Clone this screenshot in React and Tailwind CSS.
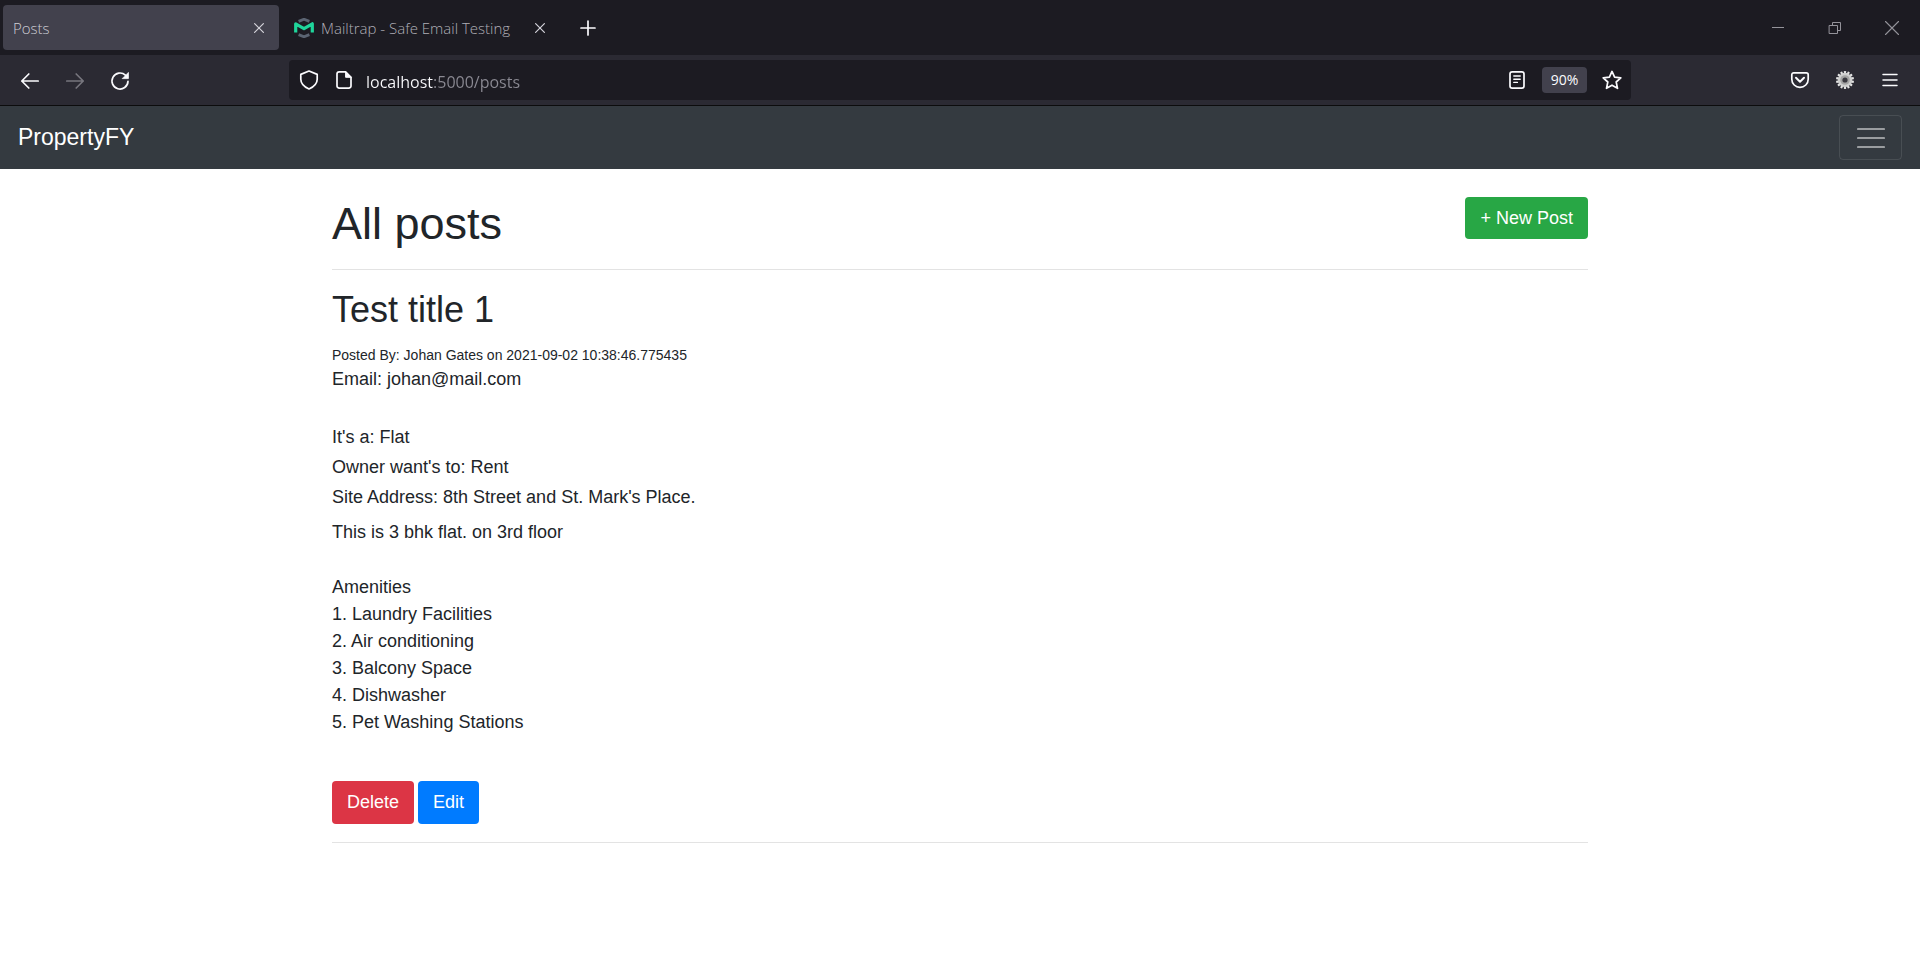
import React from "react";

const amenities = [
  "1. Laundry Facilities",
  "2. Air conditioning",
  "3. Balcony Space",
  "4. Dishwasher",
  "5. Pet Washing Stations",
];

function Icon({ children, className = "" }) {
  return (
    <svg
      viewBox="0 0 20 20"
      className={`size-5 shrink-0 ${className}`}
      fill="none"
      stroke="currentColor"
      strokeWidth="1.7"
      strokeLinecap="round"
      strokeLinejoin="round"
      aria-hidden="true"
    >
      {children}
    </svg>
  );
}

function CloseTab({ label }) {
  return (
    <button type="button" aria-label={label} className="flex size-5 items-center justify-center text-[#d4d3da]">
      <Icon>
        <path d="M5.6 5.6l8.8 8.8M14.4 5.6l-8.8 8.8" strokeWidth="1.2" />
      </Icon>
    </button>
  );
}

function MailtrapLogo() {
  return (
    <svg viewBox="0 0 20 20" className="size-5 shrink-0" fill="none" aria-hidden="true">
      <path d="M4.6 3.4L10 1.2l5.400 2.200M4.600 16.600L10 18.800l5.400-2.200" stroke="#5b6472" strokeWidth="2.800" />
      <path d="M1.700 14.600V5.800L10 10.600l8.300-4.800v8.800" stroke="#1fd59b" strokeWidth="3.200" strokeLinejoin="round" />
    </svg>
  );
}

function Gear() {
  const teeth = Array.from({ length: 14 }, (_, i) => i * (360 / 14));
  return (
    <svg viewBox="0 0 20 20" className="size-5" aria-hidden="true">
      {teeth.map((a) => (
        <rect key={a} x="8.9" y="1" width="2.2" height="4" rx="0.4" fill="#e4e4e4" transform={`rotate(${a} 10 10)`} />
      ))}
      <circle cx="10" cy="10" r="7.2" fill="#cfcfcf" />
      <circle cx="10" cy="10" r="4.8" fill="#a4a4a4" />
      <circle cx="10" cy="10" r="2.6" fill="#3a3940" />
    </svg>
  );
}

function TabBar() {
  return (
    <div className="flex h-[55px] items-center justify-between bg-[#1c1b22] pl-[3px] text-[15px] leading-5 font-light text-[#b0afb7]">
      <div className="flex items-center">
        <div className="flex h-[45px] w-[276px] items-center justify-between rounded bg-[#42414d] px-[10px] text-[#cfced6]">
          <span className="pt-px">Posts</span>
          <CloseTab label="Close Posts" />
        </div>
        <div className="flex items-center pl-[15px]">
          <MailtrapLogo />
          <span className="w-[216px] pt-px pl-[7px] whitespace-nowrap">Mailtrap - Safe Email Testing</span>
          <CloseTab label="Close Mailtrap" />
        </div>
        <button type="button" aria-label="New tab" className="ml-7 text-[#fbfbfe]">
          <Icon>
            <path d="M10 3v14M3 10h14" />
          </Icon>
        </button>
      </div>
      <div className="flex items-center gap-[37px] pr-[18px] text-[#94939a]">
        <button type="button" aria-label="Minimize">
          <Icon>
            <path d="M4 9.5h12" strokeWidth="1" strokeLinecap="butt" />
          </Icon>
        </button>
        <button type="button" aria-label="Restore">
          <Icon>
            <path d="M4.5 7.5h8v8h-8zM7.5 7.5v-3h8v8h-3" strokeWidth="1" strokeLinejoin="miter" />
          </Icon>
        </button>
        <button type="button" aria-label="Close window">
          <Icon>
            <path d="M3.5 3.5l13 13M16.5 3.5l-13 13" strokeWidth="1.1" />
          </Icon>
        </button>
      </div>
    </div>
  );
}

function Toolbar() {
  return (
    <div className="flex h-[51px] items-center border-b border-[#0c0c0d] bg-[#2b2a33] text-[#fbfbfe]">
      <div className="flex w-[289px] shrink-0 items-center gap-[25px] pt-px pl-5">
        <button type="button" aria-label="Back">
          <Icon>
            <path d="M18.2 10H1.8M8.8 3L1.8 10l7 7" />
          </Icon>
        </button>
        <button type="button" aria-label="Forward" className="text-[#77767e]">
          <Icon>
            <path d="M1.8 10h16.4M11.2 3l7 7-7 7" />
          </Icon>
        </button>
        <button type="button" aria-label="Reload">
          <Icon>
            <path d="M18 10.4A8 8 0 1 1 15.4 4.1" />
            <path d="M18.4 1.8v5.8h-5.8z" fill="currentColor" strokeWidth="0.8" />
          </Icon>
        </button>
      </div>

      <div className="flex h-10 min-w-0 flex-1 items-center rounded bg-[#1c1b22] pr-[9px] pl-[10px]">
        <Icon>
          <path d="M10 1l8.200 3.400v4.800c0 4.200-3.400 7.600-8.200 9.800-4.800-2.200-8.200-5.600-8.200-9.800V4.400z" />
        </Icon>
        <Icon className="ml-[15px]">
          <path d="M11.600 1.900H5.200a2.200 2.200 0 0 0-2.200 2.200v11.800a2.200 2.200 0 0 0 2.200 2.200h9.600a2.200 2.200 0 0 0 2.200-2.200V7.300z" />
          <path d="M11.600 1.900v5.400H17z" fill="currentColor" strokeWidth="1" />
        </Icon>
        <input
          aria-label="Address"
          type="text"
          defaultValue="localhost:5000/posts"
          className="mt-[3px] ml-3 h-8 min-w-0 flex-1 bg-[linear-gradient(to_right,#fbfbfe_68px,#8b8a93_68px)] bg-clip-text text-base text-transparent caret-white outline-none"
        />
        <button type="button" aria-label="Reader view">
          <Icon>
            <rect x="3" y="1.900" width="14" height="16.200" rx="2.200" />
            <path d="M6.800 6h6.400M6.800 9.200h6.400M6.800 12.400h3.600" strokeWidth="1.400" />
          </Icon>
        </button>
        <button type="button" className="ml-[15px] h-[26px] w-[45px] rounded bg-[#42414d] text-sm leading-[26px]">
          90%
        </button>
        <button type="button" aria-label="Bookmark" className="ml-[15px]">
          <Icon>
            <path d="M10 1.400l2.600 5.700 6.200.7-4.600 4.200 1.300 6.300L10 15.200l-5.500 3.100 1.300-6.300L1.200 7.800l6.200-.7z" />
          </Icon>
        </button>
      </div>

      <div className="flex w-[289px] shrink-0 items-center justify-end gap-[25px] pr-5">
        <button type="button" aria-label="Pocket">
          <Icon>
            <path d="M3.700 2.800h12.600a1.900 1.900 0 0 1 1.900 1.900v4.500a8.200 8.200 0 0 1-16.400 0V4.700a1.900 1.900 0 0 1 1.900-1.900z" />
            <path d="M6 7.800l4 3.900 4-3.900" strokeWidth="2" />
          </Icon>
        </button>
        <button type="button" aria-label="Extension">
          <Gear />
        </button>
        <button type="button" aria-label="Menu">
          <Icon>
            <path d="M3 4.500h14M3 10h14M3 15.500h14" strokeWidth="1.500" />
          </Icon>
        </button>
      </div>
    </div>
  );
}

function SiteNav() {
  return (
    <nav className="flex h-[63px] items-center justify-between bg-[#343a40] px-[18px]">
      <a href="#home" className="pb-[2px] text-[23px] leading-[34px] text-white">
        PropertyFY
      </a>
      <button
        type="button"
        aria-label="Toggle navigation"
        className="flex h-[45px] w-[63px] items-center justify-center rounded border border-white/10 text-white/50"
      >
        <svg viewBox="0 0 28 28" className="size-7" stroke="currentColor" strokeWidth="2.200" strokeLinecap="round" aria-hidden="true">
          <path d="M1 5h26M1 14h26M1 23h26" />
        </svg>
      </button>
    </nav>
  );
}

export default function App() {
  return (
    <div className="min-h-screen bg-white">
      <header className="font-['Open_Sans',sans-serif]">
        <TabBar />
        <Toolbar />
      </header>
      <div className="font-['Liberation_Sans',Arial,sans-serif] text-lg leading-[27px] text-[#212529]">
        <SiteNav />
        <main className="mx-auto max-w-[1256px] pt-7">
          <div className="flex items-start justify-between">
            <h1 className="text-[45px] leading-[54px]">All posts</h1>
            <a href="#new" className="rounded bg-[#28a745] px-[15px] py-2 leading-[26px] text-white">
              + New Post
            </a>
          </div>
          <hr className="my-[18px] border-[#e3e3e3]" />
          <article>
            <h2 className="text-4xl leading-[43px]">Test title 1</h2>
            <p className="mt-[13px] text-sm leading-[22px]">Posted By: Johan Gates on 2021-09-02 10:38:46.775435</p>
            <p>Email: johan@mail.com</p>
            <div className="mt-[31px] flex flex-col gap-[3px]">
              <p>It's a: Flat</p>
              <p>Owner want's to: Rent</p>
              <p>Site Address: 8th Street and St. Mark's Place.</p>
            </div>
            <p className="mt-2">This is 3 bhk flat. on 3rd floor</p>
            <h3 className="mt-7">Amenities</h3>
            <ol>
              {amenities.map((item) => (
                <li key={item}>{item}</li>
              ))}
            </ol>
            <div className="mt-[45px] flex gap-1">
              <button type="button" className="rounded bg-[#dc3545] px-[15px] py-2 text-white">
                Delete
              </button>
              <a href="#edit" className="rounded bg-[#007bff] px-[15px] py-2 text-white">
                Edit
              </a>
            </div>
          </article>
          <hr className="my-[18px] border-[#e3e3e3]" />
        </main>
      </div>
    </div>
  );
}
